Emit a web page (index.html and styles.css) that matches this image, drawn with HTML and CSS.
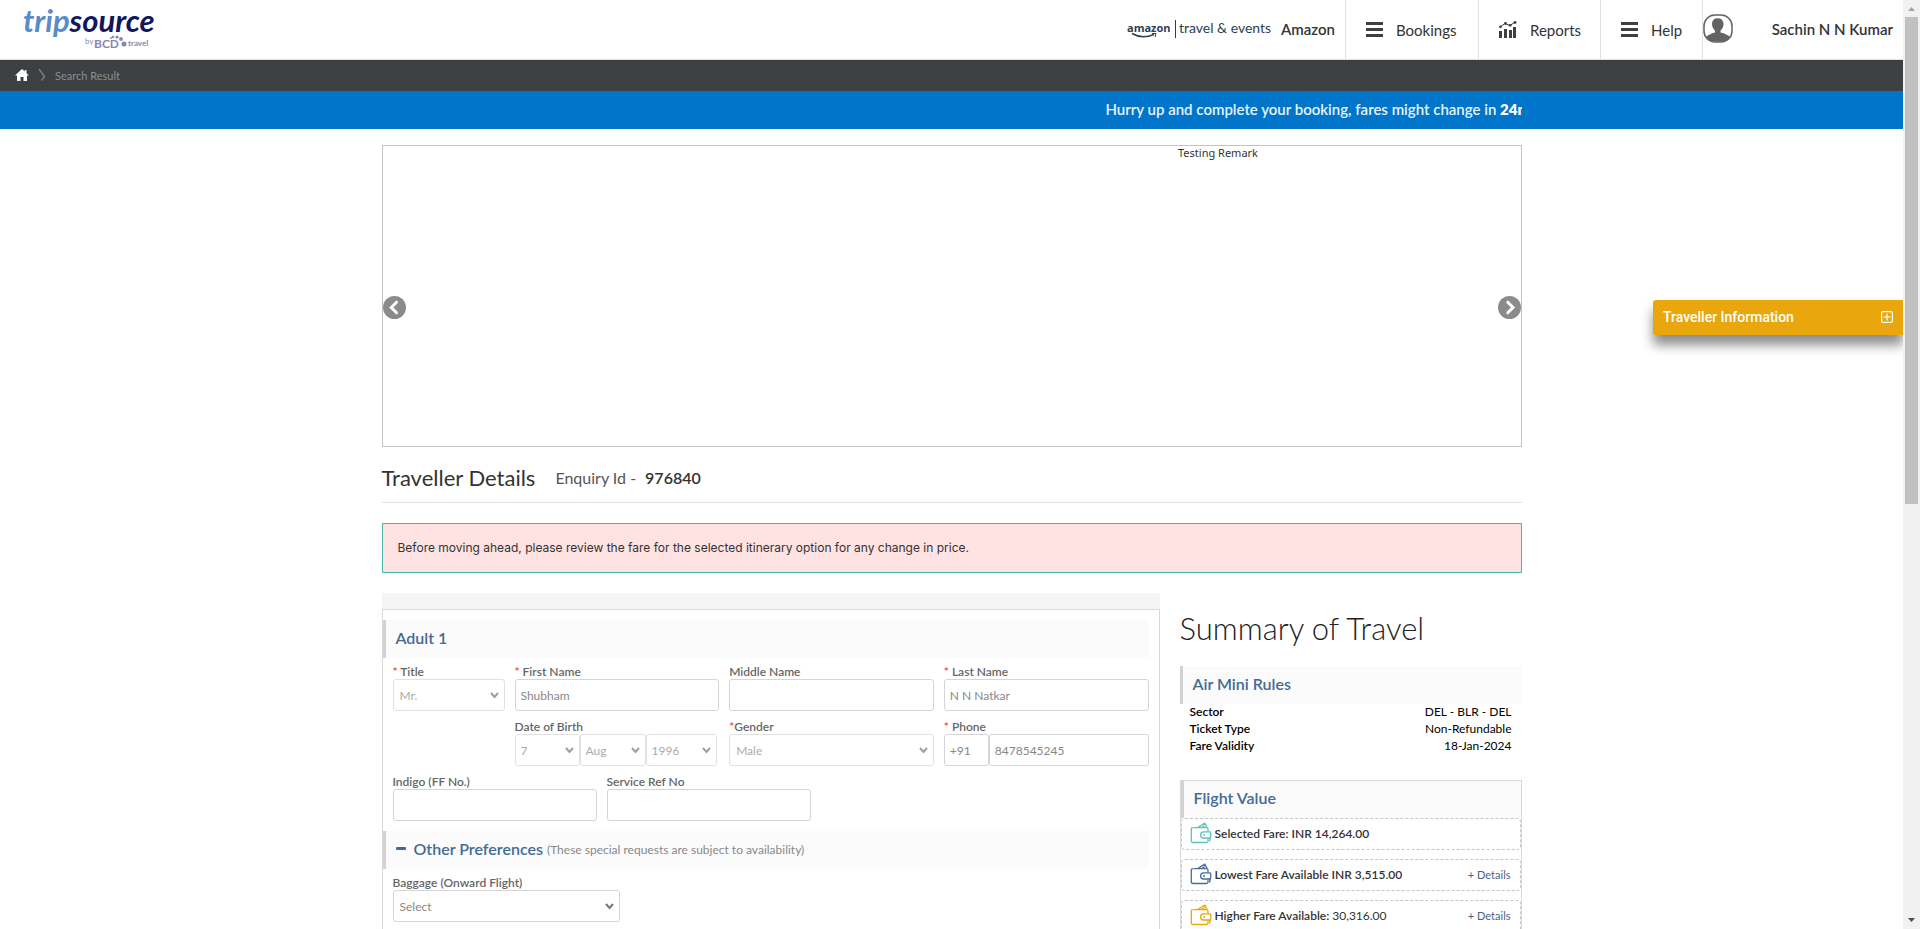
FILE: index.html
```html
<!DOCTYPE html>
<html lang="en">
<head>
<meta charset="utf-8">
<title>Traveller Details</title>
<link rel="stylesheet" href="styles.css">
</head>
<body>
<svg class="defs" aria-hidden="true">
  <symbol id="bars" viewBox="0 0 17 15"><path d="M0 0h17v3H0zM0 6h17v3H0zM0 12h17v3H0z" fill="#3c4043"/></symbol>
  <symbol id="wallet" viewBox="0 0 22 22"><g fill="none" stroke="currentColor" stroke-width="1.3"><path d="M3.500 5.700H16.500Q18 5.700 18 7.200V9.500M18 16.500V19Q18 20.500 16.500 20.500H3Q1.300 20.500 1.300 18.800V7.200Q1.300 5.700 3 5.700"/><path d="M20.300 9.800H13.500Q10.600 10 10.600 12.900T13.500 16H19.300Q20.700 16 20.700 14.600V10.500Q20.700 9.800 20 9.800M20.500 15.500L19.500 19.500"/><path d="M8 5.400L14.800 1.200L17 5.400M12 5.400L14.600 3.800"/></g><circle cx="14" cy="12.900" r="1" fill="currentColor"/></symbol>
</svg>
<div class="page">
  <header class="top">
    <a class="brand" href="#" aria-label="tripsource by BCD travel">
      <svg width="136" height="52" viewBox="0 0 136 52">
        <g font-family="Lato, sans-serif" font-weight="700" font-style="italic" font-size="31"><text x="3" y="32"><tspan fill="#5b8bc9">trip</tspan><tspan fill="#12155f">source</tspan></text></g>
        <g transform="translate(0 4)" font-family="Lato, sans-serif" fill="#8786b3"><text x="65" y="40" font-size="8">by</text><text x="74" y="44" font-size="12" font-weight="700">BCD</text><text x="108" y="42" font-size="8" font-weight="700">travel</text>
        <circle cx="91" cy="34" r="1"/><circle cx="93" cy="33" r="1.200"/><circle cx="97" cy="33" r="1.600"/><circle cx="101" cy="35" r="1.900"/><circle cx="104" cy="40" r="2.500"/></g>
      </svg>
    </a>
    <div class="client">
      <svg width="146" height="22" viewBox="0 0 146 22">
        <text x="0" y="14" font-family="Open Sans, sans-serif" font-size="11" font-weight="700" fill="#2f3e50">amazon</text>
        <path d="M5 15.500Q15 21.500 27 16.500" fill="none" stroke="#2f3e50" stroke-width="1.500"/><path d="M25 15.500L29 15.500L28 19" fill="none" stroke="#2f3e50"/>
        <path d="M48.500 2V20" stroke="#2f3e50"/>
        <text x="52" y="15" font-family="Lato, sans-serif" font-size="14" fill="#2f3e50">travel &amp; events</text>
      </svg>
      <span class="strong">Amazon</span>
    </div>
    <nav class="nav">
      <a href="#" class="n1"><svg width="17" height="15"><use href="#bars"/></svg>Bookings</a>
      <a href="#" class="n2"><svg width="18" height="17" viewBox="0 0 18 17"><path d="M0 10h3v7H0zM5 8h3v9H5zM10 9h3v8h-3zM14 6h3v11h-3z" fill="#3c4043"/><path d="M1 6L6 2.500L11 4.500L16 1" fill="none" stroke="#3c4043"/><g fill="#3c4043"><circle cx="1.500" cy="5.800" r="1.400"/><circle cx="6.500" cy="2.500" r="1.400"/><circle cx="11.200" cy="4.300" r="1.400"/><circle cx="16" cy="1.500" r="1.400"/></g></svg>Reports</a>
      <a href="#" class="n3"><svg width="17" height="15"><use href="#bars"/></svg>Help</a>
    </nav>
    <div class="user">
      <svg width="30" height="30" viewBox="0 0 30 30"><rect x="1" y="1" width="28" height="27" rx="11" fill="#fff" stroke="#636363" stroke-width="1.500"/><path d="M3 23Q6 20 12 18.500L12 16.500Q9 14 9 9.500Q9.500 4.300 14.700 4.300T20.500 9.500Q20.500 14 17.500 16.500L17.500 18.500Q24 20 27 23Q24 27.500 19 27.500H11Q6 27.500 3 23z" fill="#636363"/></svg>
      <span class="strong">Sachin N N Kumar</span>
    </div>
  </header>
  <nav class="crumbs">
    <a href="#" aria-label="Home"><svg width="14" height="12" viewBox="0 0 14 12"><path d="M7 0L0 6.500H2V12H5.500V8H8.500V12H12V6.500H14L11.500 4.200V1H9.800V2.600z" fill="#fff"/></svg></a>
    <svg width="8" height="12" viewBox="0 0 8 12"><path d="M1 0L6.500 7.500L3.500 11.500" fill="none" stroke="#777b7d" stroke-width="1.500"/></svg>
    <span>Search Result</span>
  </nav>
  <div class="notice"><div class="container ticker"><span>Hurry up and complete your booking, fares might change in <b>24mins</b></span></div></div>

  <main class="container">
    <section class="carousel">
      <button type="button" aria-label="Previous"><svg width="23" height="23" viewBox="0 0 23 23"><circle cx="11.500" cy="11.500" r="11.500" fill="#8b8b8b"/><path d="M13.500 6.200L8.300 11.500L13.500 16.800" fill="none" stroke="#fff" stroke-width="3" stroke-linecap="round"/></svg></button>
      <p>Testing Remark</p>
      <button class="next" type="button" aria-label="Next"><svg width="23" height="23" viewBox="0 0 23 23"><circle cx="11.500" cy="11.500" r="11.500" fill="#8b8b8b"/><path d="M9.800 6.200L15 11.500L9.800 16.800" fill="none" stroke="#fff" stroke-width="3" stroke-linecap="round"/></svg></button>
    </section>
    <div class="title"><h1>Traveller Details</h1><span class="enq">Enquiry Id -</span><strong>976840</strong></div>
    <div class="alert">Before moving ahead, please review the fare for the selected itinerary option for any change in price.</div>

    <div class="cols">
      <form class="form">
        <div class="strip"></div>
        <div class="card">
          <h2 class="bar">Adult 1</h2>
          <div class="rows">
            <div class="row names">
              <div class="field"><label for="title"><i>*</i> Title</label><select id="title" disabled><option>Mr.</option></select></div>
              <div class="field"><label for="first"><i>*</i> First Name</label><input id="first" value="Shubham"></div>
              <div class="field"><label for="middle">Middle Name</label><input id="middle"></div>
              <div class="field"><label for="last"><i>*</i> Last Name</label><input id="last" value="N N Natkar"></div>
            </div>
            <div class="row names">
              <div class="field dob"><label for="day">Date of Birth</label><div class="join"><select id="day" disabled><option>7</option></select><select aria-label="Month" disabled><option>Aug</option></select><select aria-label="Year" disabled><option>1996</option></select></div></div>
              <div class="field"><label for="gender"><i>*</i>Gender</label><select id="gender" disabled><option>Male</option></select></div>
              <div class="field"><label for="phone"><i>*</i> Phone</label><div class="join phone"><input aria-label="Country code" value="+91"><input id="phone" value="8478545245"></div></div>
            </div>
            <div class="row refs">
              <div class="field"><label for="ff">Indigo (FF No.)</label><input id="ff"></div>
              <div class="field"><label for="ref">Service Ref No</label><input id="ref"></div>
            </div>
          </div>
          <h2 class="bar"><svg width="10" height="3"><rect width="10" height="3" rx="1" fill="#456a94"/></svg>Other Preferences<small>(These special requests are subject to availability)</small></h2>
          <div class="rows">
            <div class="row bag"><div class="field"><label for="bag">Baggage (Onward Flight)</label><select id="bag"><option>Select</option></select></div></div>
          </div>
        </div>
      </form>
      <aside class="summary">
        <h2 class="big">Summary of Travel</h2>
        <h3 class="bar">Air Mini Rules</h3>
        <dl>
          <div><dt>Sector</dt><dd>DEL - BLR - DEL</dd></div>
          <div><dt>Ticket Type</dt><dd>Non-Refundable</dd></div>
          <div><dt>Fare Validity</dt><dd>18-Jan-2024</dd></div>
        </dl>
        <section class="value">
          <h3 class="bar">Flight Value</h3>
          <div class="fare"><svg class="teal" width="22" height="22"><use href="#wallet"/></svg><b>Selected Fare: INR 14,264.00</b></div>
          <div class="fare"><svg class="navy" width="22" height="22"><use href="#wallet"/></svg><b>Lowest Fare Available INR 3,515.00</b><a href="#">+ Details</a></div>
          <div class="fare"><svg class="gold" width="22" height="22"><use href="#wallet"/></svg><b>Higher Fare Available: <span>30,316.00</span></b><a href="#">+ Details</a></div>
        </section>
      </aside>
    </div>
  </main>
  <button class="info" type="button">Traveller Information<svg width="12" height="12" viewBox="0 0 12 12"><path d="M2 .6H10Q11.400 .6 11.400 2V10Q11.400 11.400 10 11.400H2Q.6 11.400 .6 10V2Q.6 .6 2 .6zM6 2.500V9.500M2.500 6H9.500" fill="none" stroke="#fff" stroke-width="1.200"/></svg></button>
</div>
<div class="scroll" aria-hidden="true">
  <svg width="17" height="17"><path d="M5 11H12L8.500 7z" fill="#a3a3a3"/></svg>
  <div class="track"><div class="thumb"></div></div>
  <svg width="17" height="17"><path d="M5 6H12L8.500 10z" fill="#505050"/></svg>
</div>
</body>
</html>
```
FILE: styles.css
```css
* { box-sizing: border-box; }
body { margin: 0; height: 100vh; overflow: hidden; display: flex; font-family: Lato, sans-serif; font-size: 12px; color: #333; background: #fff; }
h1, h2, h3, p, dl, dd { margin: 0; font-weight: 400; }
a { text-decoration: none; color: inherit; }
svg { flex: none; display: block; overflow: visible; }
.defs { position: absolute; width: 0; height: 0; }
.page { flex: 1; min-width: 0; position: relative; overflow: hidden; }
.container { width: 1140px; max-width: 100%; margin: 0 auto; }

.top { height: 60px; display: flex; border-bottom: 1px solid #dfe1e5; }
.brand { padding-left: 20px; }
.client { margin-left: auto; padding: 0 10px 2px 0; display: flex; align-items: center; gap: 8px; }
.strong { font-size: 15px; font-weight: 600; line-height: 18px; }
.nav { display: flex; font-size: 15px; }
.nav a { display: flex; align-items: center; padding: 0 20px; gap: 13px; border-left: 1px solid #dfe1e5; }
.nav .n1 { width: 133px; }
.nav .n2 { width: 122px; }
.nav .n3 { width: 102px; }
.user { display: flex; align-items: center; justify-content: space-between; width: 201px; padding: 0 10px 2px 0; border-left: 1px solid #dfe1e5; }

.crumbs { height: 31px; padding: 0 0 1px 15px; display: flex; align-items: center; gap: 9px; background: #3c4043; color: #8b8f91; font-size: 11px; }
.notice { height: 38px; background: #0075c9; color: #e6f3fc; }
.ticker { overflow: hidden; white-space: nowrap; font-size: 15px; font-weight: 600; line-height: 36px; }
.ticker span { padding-left: 724px; }
.ticker b { font-weight: 800; color: #fff; }

.carousel { margin-top: 16px; height: 302px; border: 1px solid #c3c3c3; display: flex; align-items: center; justify-content: space-between; }
.carousel button { border: 0; padding: 0; background: none; margin-top: 22px; width: 23px; }
.carousel .next { margin-right: -1px; }
.carousel p { align-self: flex-start; margin-left: 532px; font: 11px/14px "Noto Sans", sans-serif; }
.title { height: 56px; padding-top: 5px; display: flex; align-items: center; border-bottom: 1px solid #e3e3e3; font-size: 16px; }
.title h1 { font-size: 22px; margin-right: 20px; }
.enq { margin-right: 9px; color: #555; }
.title strong { font-weight: 600; }
.alert { margin-top: 20px; height: 50px; padding: 0 15px; line-height: 47px; border: 1px solid #4db6ac; background: #ffe2e2; font-size: 12px; font-family: Inter, sans-serif; }

.cols { margin-top: 20px; display: grid; grid-template-columns: 1fr 342px; gap: 20px; }
.strip { height: 16px; background: #f5f5f5; }
.card { border: 1px solid #d9d9d9; padding: 10px 10px 40px 0; }
.bar { height: 38px; display: flex; align-items: center; border-left: 3px solid #d2d2d2; padding: 0 0 4px 10px; background: #fbfbfb; color: #456a94; font-size: 16px; font-weight: 600; }
.bar svg { margin-right: 8px; }
.bar small { margin-left: 4px; font-size: 12px; font-weight: 400; color: #888; padding-top: 2px; }
.rows { padding: 8px 0 10px 10px; display: grid; gap: 10px; }
.row { display: grid; gap: 10px; }
.names { grid-template-columns: 112px repeat(3, 1fr); }
.refs { grid-template-columns: 204px 204px; }
.bag { grid-template-columns: 227px; }
.field { display: grid; }
.dob { grid-column: 2; }
label { line-height: 11px; padding-bottom: 2px; font-weight: 600; color: #666; }
label i { color: #f44336; font-style: normal; }
input, select { height: 32px; width: 100%; min-width: 0; margin: 0; padding: 0 5px; border: 1px solid #d5d5d5; border-radius: 3px; background: #fff; color: #888; font: 12px Lato, sans-serif; }
select { appearance: none; padding: 0 6px; background: #fff url("data:image/svg+xml,%3Csvg xmlns='http://www.w3.org/2000/svg' width='9' height='7'%3E%3Cpath d='M1 1L4.500 5L8 1' fill='none' stroke='%23777' stroke-width='2'/%3E%3C/svg%3E") no-repeat right 5px center; }
select:disabled { opacity: .7; color: #888; }
.join { display: grid; grid-template-columns: 65px 66px 71px; }
.join select { padding: 0 5px; }
.join.phone { grid-template-columns: 45px 1fr; }

.big { font-size: 31px; line-height: 34px; padding: 18px 0 21px; font-weight: 300; color: #222; }
dl { padding: 0 10px; color: #000; }
dl div { display: flex; justify-content: space-between; line-height: 15px; padding-bottom: 2px; }
dt { font-weight: 600; }
.value { margin-top: 25px; border: 1px solid #d9d9d9; height: 260px; }
.value .bar { height: 37px; }
.fare { height: 32px; margin-bottom: 9px; padding: 0 9px 2px 8px; display: flex; align-items: center; gap: 3px; border: 1px dashed #c6c6c6; border-radius: 4px; }
.fare b { font-weight: 600; }
.fare span { font-weight: 400; }
.fare a { margin-left: auto; color: #4a6484; font-size: 11px; }
.teal { color: #5ec4b8; }
.navy { color: #4a6c9c; }
.gold { color: #e9a60d; }

.info { position: absolute; right: 0; top: 300px; width: 250px; height: 35px; padding: 0 10px 1px; display: flex; align-items: center; justify-content: space-between; border: 0; border-radius: 3px 0 0 3px; background: #e9a60d; color: #fff; font: 500 14px Roboto, sans-serif; box-shadow: 0 10px 12px rgba(0, 0, 0, .45); }
.scroll { width: 17px; display: flex; flex-direction: column; background: #f1f1f1; }
.track { flex: 1; padding: 0 2px; }
.thumb { height: 54.4%; background: #c1c1c1; }
```
